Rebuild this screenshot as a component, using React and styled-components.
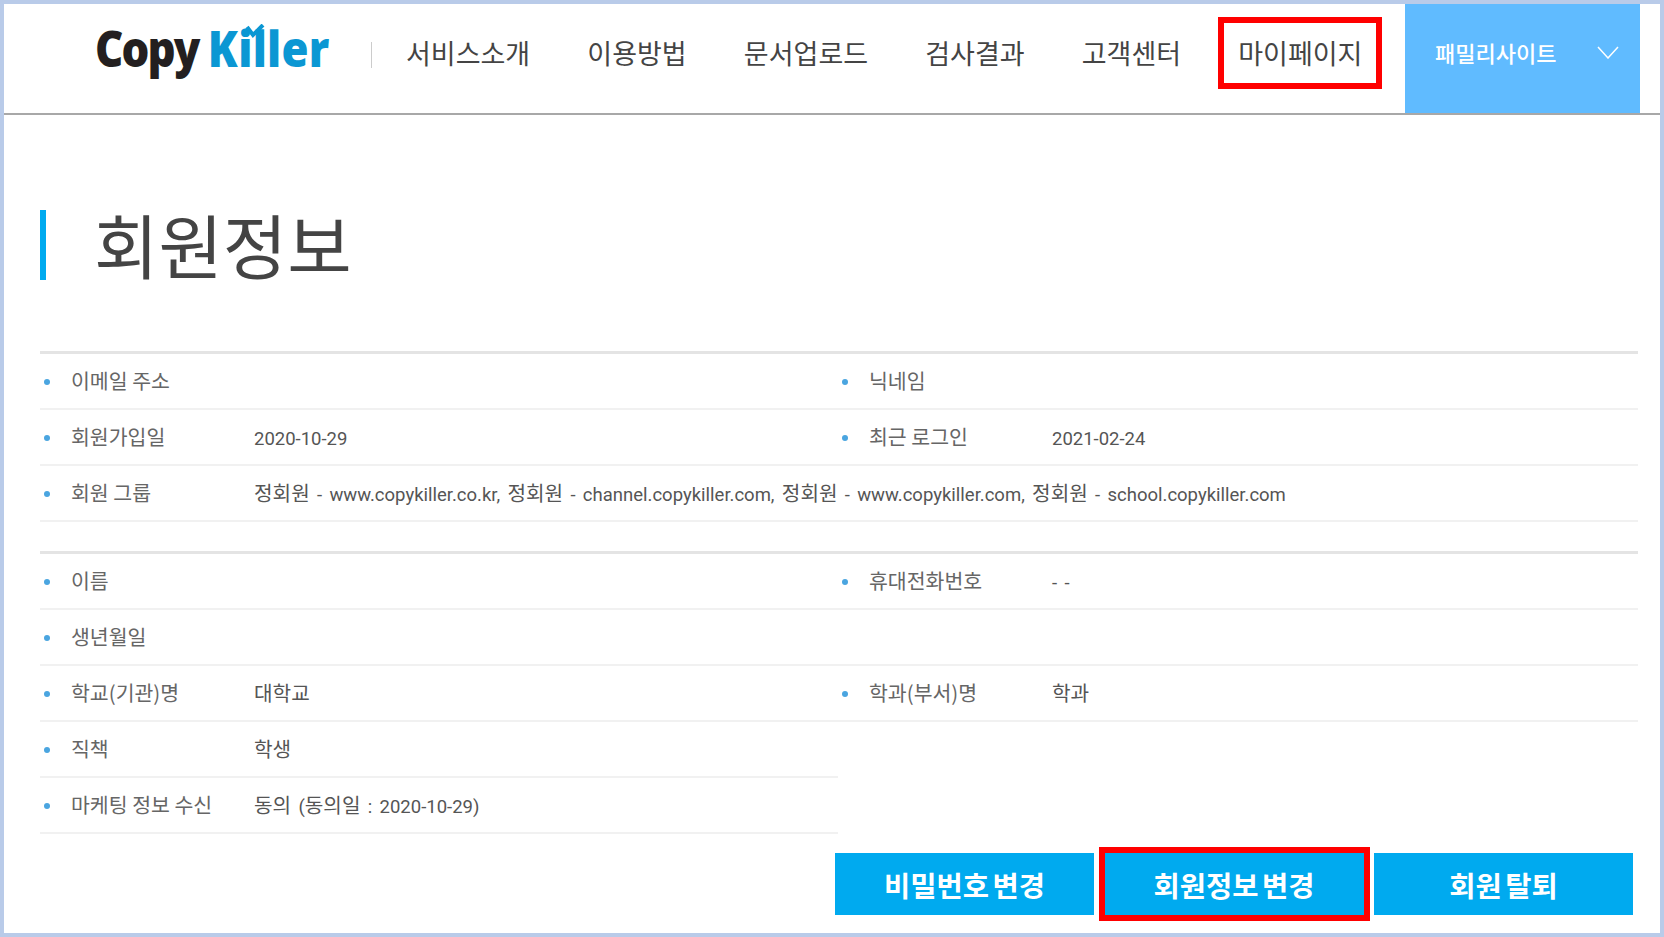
import React from "react";
import styled, { createGlobalStyle } from "styled-components";

const Global = createGlobalStyle`
  html, body { margin: 0; padding: 0; background: #fff; }
  body { font-family: "Noto Sans CJK KR", "Noto Sans", sans-serif; }
`;

const Frame = styled.div`
  box-sizing: border-box;
  width: 1664px;
  height: 937px;
  border: 4px solid #b9cbe9;
  overflow: hidden;
  background: #fff;
`;

const Header = styled.header`
  display: flex;
  align-items: stretch;
  height: 109px;
  border-bottom: 2px solid #a8a8a8;
  padding-right: 20px;
`;

const Logo = styled.div`
  position: relative;
  width: 276px;
  margin-left: 91px;
  flex: none;
  display: flex;
  align-items: center;
  white-space: nowrap;
  font-family: "Open Sans", sans-serif;
  font-weight: 800;
  font-size: 50px;
  letter-spacing: -2.2px;
  color: #231f20;
`;

const LogoText = styled.span`
  display: inline-block;
  transform: scaleX(0.875);
  transform-origin: left center;
  margin-top: -22px;
`;

const LogoBlue = styled.span`
  color: #0b97d3;
  letter-spacing: 0.3px;
`;

const LogoCheck = styled.svg`
  position: absolute;
  left: 150px;
  top: 20px;
  width: 20px;
  height: 15px;
`;

const Separator = styled.div`
  width: 1px;
  height: 26px;
  background: #ccc;
  align-self: center;
  margin-top: -8px;
`;

const Nav = styled.nav`
  display: flex;
  align-items: center;
  margin-left: 34px;
  gap: 57.15px;
  margin-top: -11px;
`;

const NavItem = styled.a`
  font-size: 27px;
  color: #444;
  white-space: nowrap;
  line-height: 1.2;
  outline: ${(p) => (p.$active ? "6px solid #ff0000" : "none")};
  outline-offset: ${(p) => (p.$active ? "14px" : "0")};
`;

const Family = styled.div`
  margin-left: auto;
  width: 235px;
  flex: none;
  background: #60bbff;
  color: #fff;
  display: flex;
  align-items: center;
  justify-content: space-between;
  box-sizing: border-box;
  padding: 0 21px 13px 30px;
  font-size: 22px;
  font-weight: 500;
`;

const Main = styled.main`
  padding: 95px 22px 0 36px;
`;

const Title = styled.h1`
  margin: 0 0 71px;
  height: 70px;
  line-height: 68px;
  border-left: 6px solid #00aaef;
  padding-left: 48px;
  font-size: 70px;
  font-weight: 400;
  color: #444;
`;

const Group = styled.div`
  display: grid;
  grid-template-columns: 798px 1fr;
  border-top: 3px solid #e4e4e4;
  & + & {
    margin-top: 29px;
  }
`;

const Cell = styled.div`
  display: flex;
  align-items: baseline;
  height: 54px;
  line-height: 52px;
  padding-left: 4px;
  border-bottom: ${(p) => (p.$bare ? "2px solid transparent" : "2px solid #f1f1f1")};
  grid-column: ${(p) => (p.$wide ? "1 / -1" : "auto")};
`;

const Bullet = styled.i`
  align-self: center;
  margin-top: 1px;
  width: 6px;
  height: 6px;
  border-radius: 50%;
  background: #4aa5e0;
  flex: none;
  margin-right: 21px;
`;

const Label = styled.span`
  width: 183px;
  flex: none;
  color: #666;
  font-size: 20.5px;
`;

const Value = styled.span`
  white-space: pre;
  color: #555;
  font-family: Roboto, sans-serif;
  font-size: 18.5px;
  word-spacing: 2.7px;
`;

const Hangul = styled.span`
  font-family: "Noto Sans CJK KR", sans-serif;
  font-size: 20.2px;
`;

const Actions = styled.div`
  display: flex;
  justify-content: flex-end;
  gap: 10.5px;
  margin-top: 19px;
  padding-right: 5px;
`;

const Action = styled.button`
  width: 259px;
  height: 62px;
  border: 0;
  background: #00aaef;
  color: #fff;
  font-family: inherit;
  font-size: 28.5px;
  font-weight: 700;
  word-spacing: -3px;
  outline: ${(p) => (p.$active ? "6px solid #ff0000" : "none")};
`;

const accountRows = [
  [["이메일 주소", ""], ["닉네임", ""]],
  [["회원가입일", "2020-10-29"], ["최근 로그인", "2021-02-24"]],
  [["회원 그룹", "정회원 - www.copykiller.co.kr, 정회원 - channel.copykiller.com, 정회원 - www.copykiller.com, 정회원 - school.copykiller.com"]],
];

const profileRows = [
  [["이름", ""], ["휴대전화번호", "- -"]],
  [["생년월일", ""], null],
  [["학교(기관)명", "대학교"], ["학과(부서)명", "학과"]],
  [["직책", "학생"], "none"],
  [["마케팅 정보 수신", "동의 (동의일 : 2020-10-29)"], "none"],
];

// korean runs are set bigger than the latin ones
const splitHangul = (text) =>
  text.split(/([\uAC00-\uD7A3]+)/).map((part, i) => (i % 2 ? <Hangul key={i}>{part}</Hangul> : part));

const renderRows = (rows) =>
  rows.flatMap((row, i) =>
    row.map((item, j) => {
      if (item === "none") return <Cell key={`${i}-${j}`} $bare />;
      if (!item) return <Cell key={`${i}-${j}`} />;
      return (
        <Cell key={`${i}-${j}`} $wide={row.length === 1}>
          <Bullet />
          <Label>{item[0]}</Label>
          <Value>{splitHangul(item[1])}</Value>
        </Cell>
      );
    })
  );

const navItems = ["서비스소개", "이용방법", "문서업로드", "검사결과", "고객센터", "마이페이지"];

export default function App() {
  return (
    <Frame>
      <Global />
      <Header>
        <Logo>
          <LogoText>
            Copy <LogoBlue>Killer</LogoBlue>
          </LogoText>
          <LogoCheck viewBox="0 0 20 15">
            <path d="M2 3 L8 11 L18 1" fill="none" stroke="#0b97d3" strokeWidth="4" />
          </LogoCheck>
        </Logo>
        <Separator />
        <Nav>
          {navItems.map((item) => (
            <NavItem key={item} $active={item === "마이페이지"}>
              {item}
            </NavItem>
          ))}
        </Nav>
        <Family>
          패밀리사이트
          <svg width="22" height="13" viewBox="0 0 22 13">
            <path d="M1 1 L11 12 L21 1" fill="none" stroke="#fff" strokeWidth="1.5" />
          </svg>
        </Family>
      </Header>
      <Main>
        <Title>회원정보</Title>
        <Group>{renderRows(accountRows)}</Group>
        <Group>{renderRows(profileRows)}</Group>
        <Actions>
          <Action>비밀번호 변경</Action>
          <Action $active>회원정보 변경</Action>
          <Action>회원 탈퇴</Action>
        </Actions>
      </Main>
    </Frame>
  );
}
